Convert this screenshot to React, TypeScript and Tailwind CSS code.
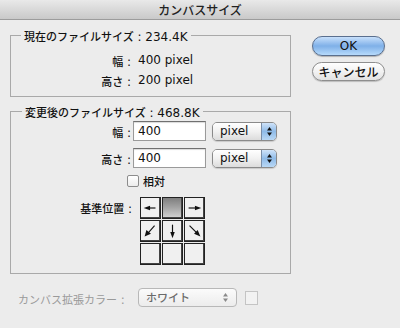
import React from "react";

const J = ({ children, className = "" }: { children: React.ReactNode; className?: string }) => (
  <span className={"font-['Noto_Sans_CJK_JP',sans-serif] text-[11px] font-medium " + className}>{children}</span>
);
const L = ({ children, className = "" }: { children: React.ReactNode; className?: string }) => (
  <span className={"font-['DejaVu_Sans',sans-serif] text-[12px] " + className}>{children}</span>
);

const Arrow = ({ kind }: { kind: string }) => {
  const common = { stroke: "#111", strokeWidth: 1.3, fill: "none" };
  let content: React.ReactNode = null;
  if (kind === "l")
    content = (
      <>
        <line x1="16" y1="11" x2="7" y2="11" {...common} />
        <polygon points="3,11 10,8.5 10,13.5" fill="#111" />
      </>
    );
  if (kind === "r")
    content = (
      <>
        <line x1="4" y1="11" x2="13" y2="11" {...common} />
        <polygon points="18,11 11,8.5 11,13.5" fill="#111" />
      </>
    );
  if (kind === "d")
    content = (
      <>
        <line x1="10.5" y1="4" x2="10.5" y2="14" {...common} />
        <polygon points="10.5,19 8,12 13,12" fill="#111" />
      </>
    );
  if (kind === "dl")
    content = (
      <>
        <line x1="15" y1="5" x2="8" y2="13" {...common} />
        <polygon points="4,17 6,10 11,14" fill="#111" />
      </>
    );
  if (kind === "dr")
    content = (
      <>
        <line x1="5" y1="5" x2="13" y2="13" {...common} />
        <polygon points="17,17 10,14 14,10" fill="#111" />
      </>
    );
  return (
    <svg width="21" height="22" viewBox="0 0 21 22">
      {content}
    </svg>
  );
};

const UpDown = ({ color = "#111" }: { color?: string }) => (
  <svg width="7" height="11" viewBox="0 0 7 11">
    <polygon points="3.5,1 6,4.5 1,4.5" fill={color} />
    <polygon points="3.5,10 6,6.5 1,6.5" fill={color} />
  </svg>
);

const PixelSelect = () => (
  <div className="flex h-[19px] w-[65px] overflow-hidden rounded-[5px] border border-[#8a8a8a] shadow-[0_1px_1px_rgba(0,0,0,0.15)]">
    <div className="flex flex-1 items-center bg-gradient-to-b from-[#ffffff] via-[#f1f1f1] to-[#dcdcdc] pl-[7px]">
      <L className="leading-none">pixel</L>
    </div>
    <div className="flex w-[15px] items-center justify-center border-l border-[#7a8ea8] bg-gradient-to-b from-[#cfe3f9] via-[#8fbbe8] to-[#b9d8f5]">
      <UpDown />
    </div>
  </div>
);

const Input = ({ v }: { v: string }) => (
  <div className="flex h-[20px] w-[73px] items-center border border-[#9a9a9a] border-t-[#707070] bg-white pl-[4px] shadow-[inset_0_1px_1px_rgba(0,0,0,0.15)]">
    <L className="leading-none">{v}</L>
  </div>
);

export default function App() {
  const cells = ["l", "sel", "r", "dl", "d", "dr", "", "", ""];
  return (
    <div className="flex h-[328px] w-[400px] flex-col overflow-hidden bg-[#ececec] text-[#111]">
      <div className="flex h-[20px] shrink-0 items-center justify-center border-b border-[#9c9c9c] bg-gradient-to-b from-[#e9e9e9] to-[#c9c9c9]">
        <J className="text-[12px] leading-none text-[#222]">カンバスサイズ</J>
      </div>
      <div className="flex pl-[10px]">
        <div className="flex w-[281px] flex-col">
          <fieldset className="mt-[7px] border border-[#a9a9a9] pb-[6px]">
            <legend className="ml-[10px] h-[16px] px-[3px] leading-[16px]">
              <J>現在のファイルサイズ</J>
              <L> : 234.4K</L>
            </legend>
            <div className="mt-[7px] flex h-[20px] items-center">
              <div className="w-[120px] text-right leading-none">
                <J>幅</J>
                <L> :</L>
              </div>
              <L className="ml-[7px] leading-none">400 pixel</L>
            </div>
            <div className="flex h-[20px] items-center">
              <div className="w-[120px] text-right leading-none">
                <J>高さ</J>
                <L> :</L>
              </div>
              <L className="ml-[7px] leading-none">200 pixel</L>
            </div>
          </fieldset>
          <fieldset className="mt-[6px] border border-[#a9a9a9] pb-[8px]">
            <legend className="ml-[11px] h-[16px] px-[3px] leading-[16px]">
              <J>変更後のファイルサイズ</J>
              <L> : 468.8K</L>
            </legend>
            <div className="mt-[2px] flex h-[20px] items-center">
              <div className="w-[120px] text-right leading-none">
                <J>幅</J>
                <L> :</L>
              </div>
              <div className="ml-[2px]">
                <Input v="400" />
              </div>
              <div className="ml-[6px]">
                <PixelSelect />
              </div>
            </div>
            <div className="mt-[7px] flex h-[20px] items-center">
              <div className="w-[120px] text-right leading-none">
                <J>高さ</J>
                <L> :</L>
              </div>
              <div className="ml-[2px]">
                <Input v="400" />
              </div>
              <div className="ml-[6px]">
                <PixelSelect />
              </div>
            </div>
            <div className="mt-[5px] flex h-[16px] items-center pl-[116px]">
              <div className="h-[12px] w-[12px] rounded-[2px] border border-[#8c8c8c] bg-gradient-to-b from-white to-[#ececec]" />
              <J className="ml-[4px] leading-none">相対</J>
            </div>
            <div className="mt-[8px] flex items-start">
              <div className="mt-[2px] w-[121px] text-right leading-none">
                <J>基準位置</J>
                <L> :</L>
              </div>
              <div className="ml-[8px] grid grid-cols-[repeat(3,21px)] grid-rows-[repeat(3,22px)] gap-[1px]">
                {cells.map((c, i) => (
                  <div
                    key={i}
                    className={
                      "flex items-center justify-center border border-[#222] shadow-[inset_-1px_-1px_0_#444] " +
                      (c === "sel"
                        ? "bg-gradient-to-b from-[#7f7f7f] via-[#a6a6a6] to-[#d4d4d4]"
                        : "bg-[#f0f0f0]")
                    }
                  >
                    {c && c !== "sel" ? <Arrow kind={c} /> : null}
                  </div>
                ))}
              </div>
            </div>
          </fieldset>
          <div className="mt-[14px] flex items-center">
            <div className="w-[128px] pl-[8px] leading-none text-[#9a9a9a]">
              <J className="font-normal text-[#9a9a9a]">カンバス拡張カラー</J>
              <L className="text-[#9a9a9a]"> :</L>
            </div>
            <div className="flex h-[19px] w-[99px] items-center rounded-[4px] border border-[#b8b8b8] bg-gradient-to-b from-[#fbfbfb] to-[#ececec] pl-[7px] pr-[7px]">
              <J className="flex-1 leading-none text-[#6a6a6a]">ホワイト</J>
              <UpDown color="#8a8a8a" />
            </div>
            <div className="ml-[8px] h-[14px] w-[13px] border border-[#c4c4c4] bg-[#f2f2f2]" />
          </div>
        </div>
        <div className="ml-[21px] flex flex-col">
          <div className="mt-[16px] flex h-[20px] w-[73px] items-center justify-center rounded-full border border-[#5a6f8e] bg-gradient-to-b from-[#c8e0fb] via-[#7fb0e8] to-[#b6dafb] shadow-[0_1px_1px_rgba(0,0,0,0.25)]">
            <L className="leading-none text-[#111]">OK</L>
          </div>
          <div className="mt-[6px] flex h-[19px] w-[73px] items-center justify-center rounded-full border border-[#8e8e8e] bg-gradient-to-b from-[#ffffff] via-[#f2f2f2] to-[#e2e2e2] shadow-[0_1px_1px_rgba(0,0,0,0.2)]">
            <J className="text-[12px] leading-none">キャンセル</J>
          </div>
        </div>
      </div>
    </div>
  );
}
